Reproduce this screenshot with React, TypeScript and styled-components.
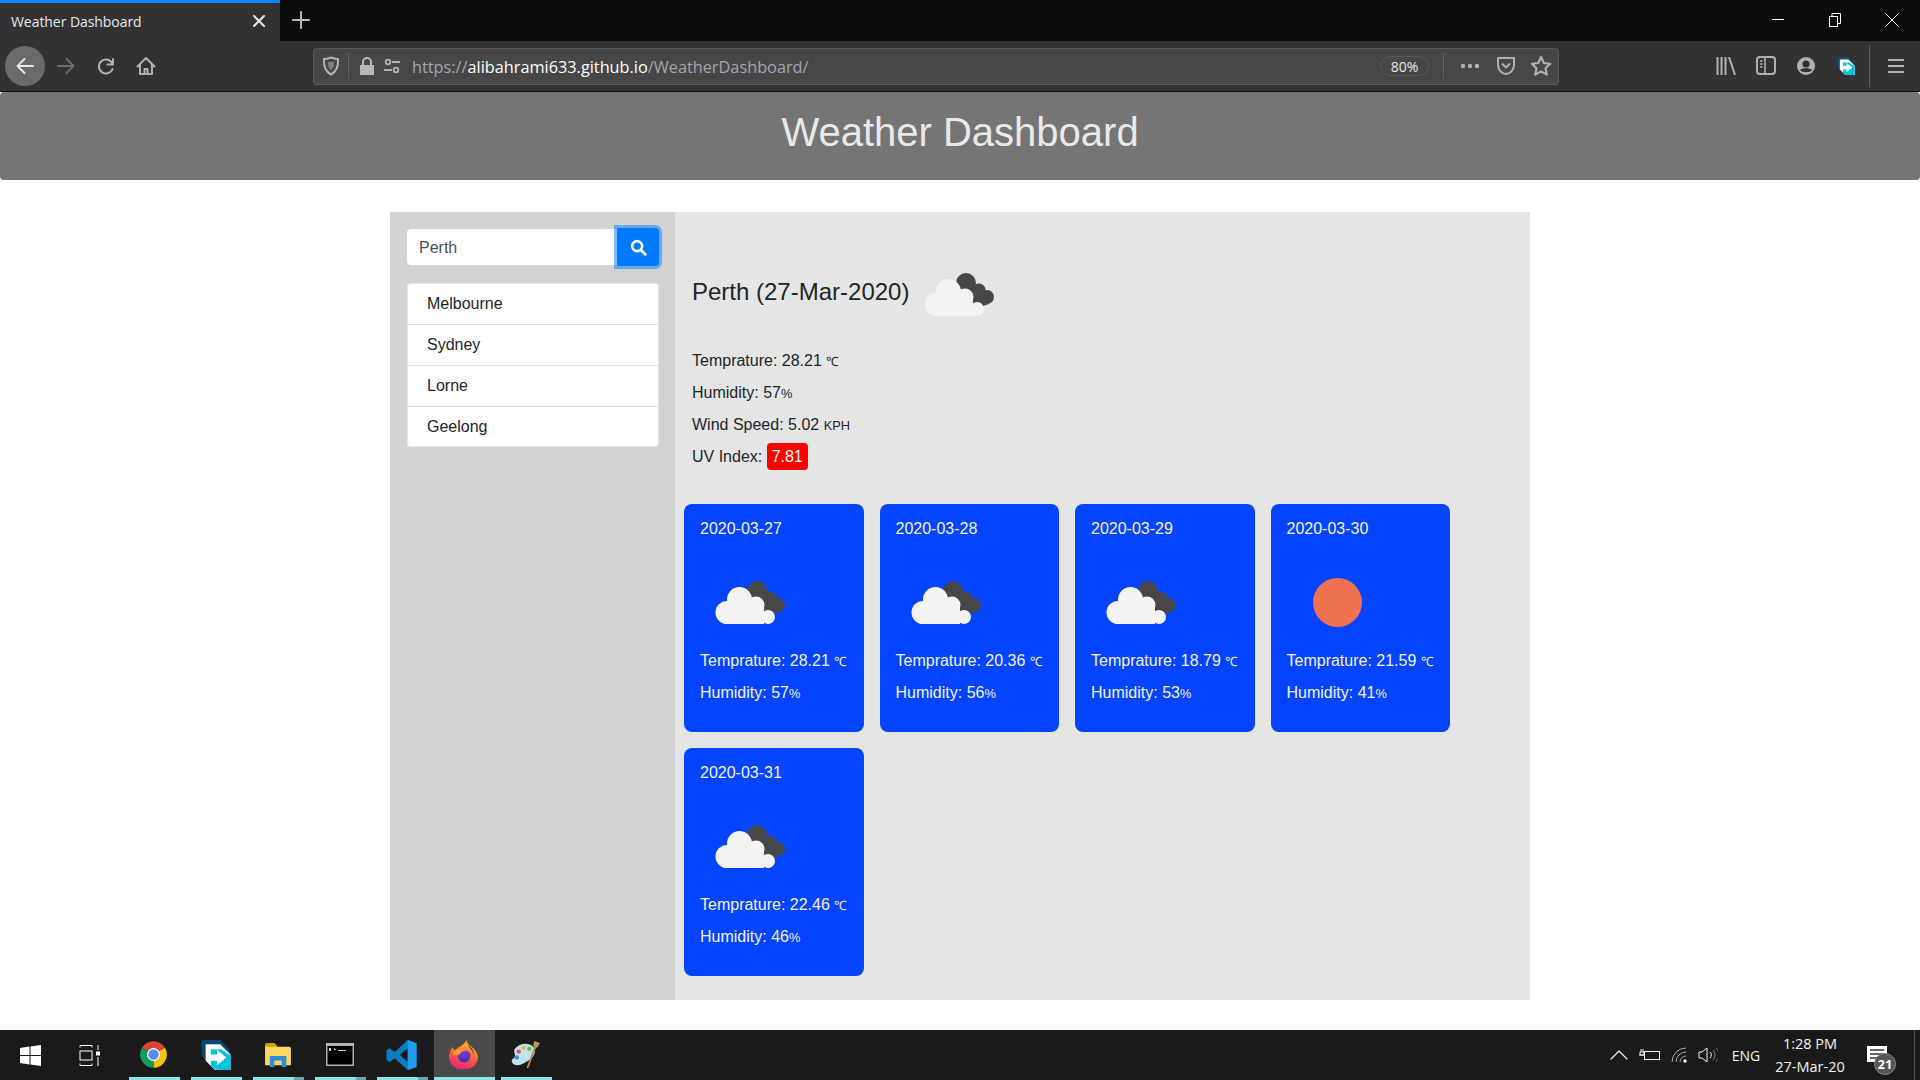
import React from "react";
import styled, { createGlobalStyle } from "styled-components";

const Global = createGlobalStyle`
  html, body { margin: 0; padding: 0; background: #fff; }
  * { box-sizing: border-box; }
`;

const Screen = styled.div`
  width: 1920px; height: 1080px; overflow: hidden; display: flex; flex-direction: column;
  font-family: "Liberation Sans", Arial, sans-serif; color: #212529; background: #fff;
`;

/* ---------- browser chrome ---------- */
const TabStrip = styled.div`
  height: 41px; background: #0c0c0c; display: flex; align-items: stretch; flex: none;
`;
const Tab = styled.div`
  width: 280px; background: #323234; border-top: 3px solid #0a84ff; display: flex; align-items: center;
  justify-content: space-between; padding: 0 14px 2px 11px; color: #e8e8e8;
  font: 14px "Open Sans", sans-serif; letter-spacing: -0.06px;
`;
const PlusSlot = styled.div`
  width: 42px; display: flex; align-items: center; justify-content: center; color: #b8b8b8; padding-bottom: 2px;
`;
const WindowControls = styled.div`
  margin-left: auto; display: flex; color: #fff;
`;
const WinBtn = styled.div`
  width: 57px; display: flex; align-items: center; justify-content: center; padding-bottom: 1px;
`;
const Toolbar = styled.div`
  height: 51px; flex: none; background: #323234; border-bottom: 1px solid #0c0c0c;
  display: flex; align-items: center; color: #b1b1b3;
`;
const NavGroup = styled.div`
  width: 313px; flex: none; display: flex; align-items: center; padding-left: 5px;
`;
const NavBtn = styled.div<{ $active?: boolean; $off?: boolean }>`
  width: 40px; height: 40px; display: flex; align-items: center; justify-content: center;
  border-radius: 50%; margin-right: ${(p) => (p.$active ? "1px" : "0")};
  background: ${(p) => (p.$active ? "#6a6a6c" : "transparent")};
  color: ${(p) => (p.$active ? "#e6e6e6" : p.$off ? "#6c6c6e" : "#b1b1b3")};
`;
const UrlBar = styled.div`
  width: 1246px; height: 37px; flex: none; background: #474749; border: 1px solid #59595b; border-radius: 3px;
  display: flex; align-items: center; font: 16.3px "Open Sans", sans-serif;
`;
const UrlSlot = styled.div<{ $w: number; $rule?: boolean }>`
  width: ${(p) => p.$w}px; height: 26px; flex: none; display: flex; align-items: center; justify-content: center;
  border-right: ${(p) => (p.$rule ? "1px solid #5f5f61" : "none")};
`;
const UrlText = styled.div`
  flex: 1; margin-left: 12px; color: #a5a5a7; white-space: nowrap; padding-top: 1px;
  b { font-weight: 400; color: #fff; }
`;
const ZoomPill = styled.div`
  width: 49px; height: 20px; border: 1px solid #5b5b5d; border-radius: 10px; color: #e8e8e8;
  font: 14px "Open Sans", sans-serif; display: flex; align-items: center; justify-content: center; margin-right: 14px;
`;
const RuleV = styled.div<{ $h: number }>`
  width: 1px; height: ${(p) => p.$h}px; background: #5f5f61; flex: none;
`;
const EndSlots = styled.div`
  display: flex; margin-left: 8px; padding-right: 0;
`;
const RightGroup = styled.div`
  flex: 1; display: flex; align-items: center; justify-content: flex-end; padding-right: 4px;
`;
const RightBtn = styled.div`
  width: 40px; height: 40px; display: flex; align-items: center; justify-content: center; padding-bottom: 1px;
`;
const RightRule = styled.div`
  width: 10px; height: 42px; flex: none; display: flex; justify-content: flex-start; padding-left: 3px;
`;

/* ---------- page ---------- */
const Page = styled.main`
  flex: 1; background: #fff; display: flex; flex-direction: column; align-items: center;
`;
const Banner = styled.header`
  width: 100%; height: 88px; background: #757575; border-radius: 4px; color: #e9e9e9;
  display: flex; justify-content: center; padding-top: 16px;
`;
const Title = styled.h1`
  margin: 0; font-size: 40px; font-weight: 400; line-height: 48px;
`;
const Shell = styled.div`
  width: 1140px; height: 788px; margin-top: 32px; display: flex;
`;
const Side = styled.aside`
  width: 285px; flex: none; background: #d3d3d3; padding: 16px 0 0 17px;
`;
const SearchForm = styled.div`
  width: 252px; height: 38px; display: flex; align-items: center; margin-bottom: 17px;
`;
const SearchInput = styled.div`
  flex: 1; height: 36px; background: #fff; border-radius: 4px 0 0 4px; color: #495057; font-size: 16px;
  display: flex; align-items: center; padding: 1px 0 0 12px;
`;
const SearchBtn = styled.div`
  width: 42px; height: 38px; background: #007bff; border-radius: 0 4px 4px 0; color: #fff;
  box-shadow: 0 0 0 3px rgba(0, 123, 255, 0.5); display: flex; align-items: center; justify-content: center;
  position: relative;
`;
const CityList = styled.ul`
  width: 252px; margin: 0; padding: 0; list-style: none; background: #fff; border-radius: 4px;
  box-shadow: inset 0 0 0 1px #e6e6e6;
`;
const City = styled.li`
  height: 41px; padding-left: 20px; display: flex; align-items: center; font-size: 16px; color: #212529;
  & + & { border-top: 1px solid #dfdfdf; }
`;
const Content = styled.section`
  flex: 1; background: #e5e5e5; padding-top: 32px;
`;
const HeadRow = styled.div`
  height: 100px; display: flex; padding-left: 17px;
`;
const CityTitle = styled.h2`
  margin: 30px 0 0; font-size: 24px; line-height: 36px; font-weight: 400; width: 217px; white-space: nowrap;
`;
const Stat = styled.p`
  margin: 0; padding-left: 17px; height: 32px; font-size: 16px; line-height: 34px; white-space: nowrap;
`;
const Unit = styled.small`
  font-size: 80%;
`;
const UvBadge = styled.span`
  display: inline-block; width: 41px; height: 27px; background: #f00; color: #fff; border-radius: 4px;
  text-align: center; line-height: 27px; vertical-align: 0;
`;
const Cards = styled.div`
  display: grid; grid-template-columns: repeat(4, 179.5px); gap: 16px; margin: 32px 0 0 9px;
`;
const Card = styled.article`
  height: 228px; background: #0544ff; color: #f2f2ff; border-radius: 8px; padding: 13px 0 0 16px; font-size: 16px;
`;
const CardLine = styled.div`
  height: 32px; line-height: 34px; white-space: nowrap;
`;
const CardDate = styled.div`
  height: 24px; line-height: 24px; margin-bottom: 11px;
`;
const IconBox = styled.div`
  height: 92px;
`;

/* ---------- taskbar ---------- */
const Taskbar = styled.footer`
  height: 50px; flex: none; background: #1a1a1a; display: flex; align-items: stretch; color: #f2f2f2;
  font: 14px "Open Sans", sans-serif;
`;
const StartBtn = styled.div<{ $w: number }>`
  width: ${(p) => p.$w}px; flex: none; display: flex; align-items: center; justify-content: center;
`;
const TaskApps = styled.div`
  display: flex; margin-left: 11px; gap: 11px;
`;
const TaskApp = styled.div<{ $active?: boolean; $stack?: boolean; $tight?: boolean }>`
  width: ${(p) => (p.$active ? "61px" : "51px")}; margin-left: ${(p) => (p.$tight ? "-5px" : "0")};
  display: flex; align-items: center; justify-content: center; padding: 0 2px 1px 0;
  background: ${(p) => (p.$active ? "#4a4a4a" : "transparent")}; position: relative;
  &::after {
    content: ""; position: absolute; left: 0; right: 0; bottom: 0; height: 3px;
    background: ${(p) =>
      p.$stack ? "linear-gradient(90deg, #8ae4ea 0 80%, #66a8ac 80% 100%)" : "#8ae4ea"};
  }
`;
const Tray = styled.div`
  margin-left: auto; display: flex; align-items: center; position: relative;
`;
const TraySlot = styled.div<{ $w: number }>`
  width: ${(p) => p.$w}px; flex: none; display: flex; align-items: center; justify-content: center;
`;
const Clock = styled.div`
  width: 78px; margin-right: 6px; flex: none; white-space: nowrap; display: flex; flex-direction: column; align-items: center;
  line-height: 23px; font-size: 14.5px;
`;
const Note = styled.div`
  width: 60px; height: 100%; flex: none; display: flex; align-items: center; justify-content: flex-start;
  padding-left: 12px; border-right: 1px solid #555; margin-right: 5px; position: relative;
`;
const NoteBadge = styled.div`
  position: absolute; left: 19px; top: 23px; width: 22px; height: 22px; border-radius: 50%;
  background: #555; border: 1px solid #888; color: #fff; font: 700 13px/20px "Open Sans", sans-serif; text-align: center;
`;

/* ---------- drawings ---------- */
const Cloud = () => (
  <svg width="100" height="92" viewBox="0 0 100 92">
    <g fill="#47474a">
      <circle cx="57" cy="39" r="10" />
      <circle cx="70" cy="46" r="6.5" />
      <circle cx="78" cy="53" r="7" />
      <path d="M48 34 L75 46 L80 60 L62 66 Z" />
    </g>
    <g fill="#f3f3f2">
      <circle cx="27" cy="60.5" r="11.5" />
      <circle cx="39.5" cy="47.5" r="12.5" />
      <circle cx="56" cy="53" r="8.5" />
      <circle cx="68" cy="65" r="7" />
      <path d="M27 50 H64 V72 H27 Z" />
    </g>
  </svg>
);
const Sun = () => (
  <svg width="100" height="92" viewBox="0 0 100 92">
    <circle cx="50.5" cy="50.5" r="24.5" fill="#ef7150" />
  </svg>
);
const Search = () => (
  <svg width="17" height="17" viewBox="0 0 16 16" fill="none" stroke="currentColor">
    <circle cx="6.7" cy="6.7" r="4.7" strokeWidth="2.4" />
    <path d="M10.3 10.3 L14.3 14.3" strokeWidth="2.8" strokeLinecap="round" />
  </svg>
);
const Line = ({ d, w = 20, h = 20, vb = "0 0 20 20", sw = 2 }: { d: string; w?: number; h?: number; vb?: string; sw?: number }) => (
  <svg width={w} height={h} viewBox={vb} fill="none" stroke="currentColor" strokeWidth={sw} strokeLinejoin="round" strokeLinecap="round">
    <path d={d} />
  </svg>
);
const Shield = () => (
  <svg width="18" height="20" viewBox="0 0 18 20" fill="none" stroke="#b1b1b3">
    <path d="M2 3 C6 3 7 2 9 1.5 C11 2 12 3 16 3 C16.5 11 14 16 9 18.5 C4 16 1.5 11 2 3 Z" strokeWidth="2" />
    <path d="M6 6 H12 C12 10 11 12.5 9 14 C7 12.5 6 10 6 6 Z" fill="#b1b1b3" stroke="none" opacity="0.55" />
  </svg>
);
const Lock = () => (
  <svg width="16" height="20" viewBox="0 0 16 20">
    <path d="M1 9 H15 V19 H1 Z" fill="#b8b8ba" />
    <path d="M4 9 V6 A4 4 0 0 1 12 6 V9" fill="none" stroke="#b8b8ba" strokeWidth="2" />
  </svg>
);
const Perm = () => (
  <svg width="18" height="18" viewBox="0 0 18 18" fill="none" stroke="#b1b1b3" strokeWidth="2">
    <circle cx="4.5" cy="4.5" r="2.6" />
    <path d="M9 4.5 H18 M0 13.5 H9" />
    <circle cx="13.5" cy="13.5" r="2.6" />
  </svg>
);
const Pocket = () => (
  <svg width="20" height="20" viewBox="0 0 20 20" fill="none" stroke="#b1b1b3" strokeWidth="2" strokeLinecap="round" strokeLinejoin="round">
    <path d="M2 2 H18 V9 C18 14 14 18 10 18 C6 18 2 14 2 9 Z" />
    <path d="M6.5 8 L10 11.5 L13.5 8" />
  </svg>
);
const Star = () => (
  <svg width="22" height="22" viewBox="0 0 22 22" fill="none" stroke="#b1b1b3" strokeWidth="2.2" strokeLinejoin="round">
    <path d="M11 2 L13.8 8 L20.2 8.8 L15.5 13.2 L16.8 19.6 L11 16.4 L5.2 19.6 L6.5 13.2 L1.8 8.8 L8.2 8 Z" />
  </svg>
);
const Dots = () => (
  <svg width="20" height="6" viewBox="0 0 20 6" fill="#b1b1b3">
    <circle cx="3" cy="3" r="2.2" /><circle cx="10" cy="3" r="2.2" /><circle cx="17" cy="3" r="2.2" />
  </svg>
);
const Library = () => (
  <svg width="20" height="18" viewBox="0 0 20 18" stroke="#b1b1b3" strokeWidth="2" fill="none">
    <path d="M1.5 0 V18 M5.5 0 V18 M9.5 0 V18 M13 0 L19 18" />
  </svg>
);
const SidebarIcon = () => (
  <svg width="20" height="19" viewBox="0 0 20 19" fill="none" stroke="#b1b1b3" strokeWidth="2">
    <rect x="1" y="1" width="18" height="17" rx="3" />
    <path d="M9 1 V18 M4 5 H6.5 M4 8 H6.5 M4 11 H6.5" strokeWidth="1.6" />
  </svg>
);
const Account = () => (
  <svg width="18" height="18" viewBox="0 0 18 18">
    <circle cx="9" cy="9" r="9" fill="#b1b1b3" />
    <circle cx="9" cy="7" r="3.6" fill="#323234" />
    <path d="M3 13 C5 10.5 13 10.5 15 13 C13 16 5 16 3 13 Z" fill="#323234" />
  </svg>
);
const Transfer = ({ s }: { s: number }) => (
  <svg width={s} height={s} viewBox="0 0 28 29">
    <path d="M0 0 H18 L27 9 V13 L18 4 H4 V19 L0 15 Z" fill="#0b4a6e" />
    <path d="M4 4 H18 L28 14 V29 H13 L4 20 Z" fill="#fff" />
    <path d="M9 9 H19 L28 15 V29 H14 L9 25 Z" fill="#00c4e0" />
    <path d="M7 14 H15 V9.5 L24 17 L15 24.5 V20 H7 Z" fill="#fff" />
  </svg>
);
const Hamburger = () => (
  <svg width="16" height="16" viewBox="0 0 16 16" stroke="#b1b1b3" strokeWidth="2.2">
    <path d="M0 2 H16 M0 8 H16 M0 14 H16" />
  </svg>
);
const WindowsLogo = () => (
  <svg width="21" height="21" viewBox="0 0 21 21" fill="#fff">
    <path d="M0 3 L9.5 1.6 V10 H0 Z M10.5 1.4 L21 0 V10 H10.5 Z M0 11 H9.5 V19.4 L0 18 Z M10.5 11 H21 V21 L10.5 19.6 Z" />
  </svg>
);
const TaskView = () => (
  <svg width="21" height="21" viewBox="0 0 21 21" fill="none" stroke="#fff" strokeWidth="1">
    <path d="M1 2.5 V0.5 H13 V2.5 M1 18.5 V20.5 H13 V18.5" />
    <rect x="1" y="6" width="12" height="9" />
    <path d="M19 0 V5 M19 12 V21" />
    <rect x="17.5" y="7" width="3" height="3" fill="#fff" />
  </svg>
);
const Chrome = () => (
  <svg width="29" height="29" viewBox="0 0 24 24">
    <path d="M12 12 L2.47 6.5 A11 11 0 0 1 21.53 6.5 Z" fill="#db4437" />
    <path d="M12 12 L21.53 6.5 A11 11 0 0 1 12 23 Z" fill="#f4c20d" />
    <path d="M12 12 L12 23 A11 11 0 0 1 2.47 6.5 Z" fill="#0f9d58" />
    <circle cx="12" cy="12" r="5.4" fill="#fff" />
    <circle cx="12" cy="12" r="4.3" fill="#5a8cf0" />
  </svg>
);
const Explorer = () => (
  <svg width="28" height="24" viewBox="0 0 28 26">
    <path d="M0 2 A2 2 0 0 1 2 0 H10 L13 3 V6 H0 Z" fill="#d99a0d" />
    <path d="M0 4 H26 A2 2 0 0 1 28 6 V24 H0 Z" fill="#fdd661" />
    <path d="M5 14 H23 V26 H18 V19 H10 V26 H5 Z" fill="#2d8fdc" />
  </svg>
);
const Terminal = () => (
  <svg width="28" height="23" viewBox="0 0 28 23">
    <rect width="28" height="23" fill="#b0b0b0" />
    <rect x="1.5" y="3" width="25" height="18.5" fill="#000" />
    <path d="M3 5 H5 V8 H3 Z M8 5 L11 7 L8 7 Z M12 7 H20 V8 H12 Z" fill="#ccc" />
  </svg>
);
const VsCode = () => (
  <svg width="31" height="30" viewBox="0 0 24 24">
    <path d="M17 0 L24 2.5 V21.5 L17 24 L6.5 14.5 L2.5 17.5 L0 16 V8 L2.5 6.5 L6.5 9.5 Z M17 6.5 L10.5 12 L17 17.5 Z" fill="#0a7cc4" fillRule="evenodd" />
    <path d="M17 0 L24 2.5 V21.5 L17 24 Z" fill="#1f9cf0" />
  </svg>
);
const Firefox = () => (
  <svg width="29" height="29" viewBox="0 0 29 29">
    <defs>
      <linearGradient id="fx" x1="0.7" y1="0" x2="0.4" y2="1">
        <stop offset="0" stopColor="#ffc02e" />
        <stop offset="0.5" stopColor="#ff6a30" />
        <stop offset="1" stopColor="#e81f80" />
      </linearGradient>
      <linearGradient id="fy" x1="0.5" y1="0" x2="0.5" y2="1">
        <stop offset="0" stopColor="#8a3fd0" />
        <stop offset="1" stopColor="#4b2bb0" />
      </linearGradient>
    </defs>
    <path d="M18 0 C17 4 21 5 24 8 C27 11 29 14 29 17 A14.5 12.5 0 1 1 0.5 14 C1 11 2 9 4 7 C4 9 5 10 6 10 C9 7 14 6 18 0 Z" fill="url(#fx)" />
    <circle cx="15" cy="16" r="6.5" fill="url(#fy)" />
    <path d="M3 13 C7 8 15 8 19 11 C14 10 12 12 11 14 C9 16 6 15 3 13 Z" fill="#ff9a2e" />
    <path d="M19 5 C22 7 25 10 25 15 C24 11 21 9 19 5 Z" fill="#4a4a4a" />
  </svg>
);
const Palette = () => (
  <svg width="29" height="29" viewBox="0 0 30 30">
    <path d="M4 9 C10 2 20 3 24 8 C27 13 22 20 15 23 C9 27 3 27 1 23 C0 19 3 20 4 17 C5 14 2 13 4 9 Z" fill="#bfe3f2" />
    <circle cx="8" cy="12" r="2.3" fill="#e0584f" />
    <circle cx="13" cy="8" r="2.3" fill="#f0b84a" />
    <circle cx="19" cy="9" r="2.3" fill="#76b84e" />
    <circle cx="6" cy="18" r="2.3" fill="#3d8fd0" />
    <path d="M26 5 L17 29" stroke="#b98a45" strokeWidth="2" />
    <path d="M24 1 L30 3 L27 8 L23 6 Z" fill="#c09a5a" />
  </svg>
);

const days = [
  { date: "2020-03-27", t: "28.21", h: "57", sun: false },
  { date: "2020-03-28", t: "20.36", h: "56", sun: false },
  { date: "2020-03-29", t: "18.79", h: "53", sun: false },
  { date: "2020-03-30", t: "21.59", h: "41", sun: true },
  { date: "2020-03-31", t: "22.46", h: "46", sun: false },
];

export default function App() {
  return (
    <Screen>
      <Global />
      <TabStrip>
        <Tab>
          Weather Dashboard
          <Line w={14} h={14} vb="0 0 14 14" d="M2 2 L12 12 M12 2 L2 12" sw={2} />
        </Tab>
        <PlusSlot><Line w={18} h={18} vb="0 0 18 18" d="M9 1 V17 M1 9 H17" sw={2} /></PlusSlot>
        <WindowControls>
          <WinBtn><Line w={12} h={12} vb="0 0 12 12" d="M0 5.5 H12" sw={1} /></WinBtn>
          <WinBtn>
            <svg width="12" height="14" viewBox="0 0 12 14" fill="none" stroke="#fff"><rect x="0.5" y="3.5" width="8" height="10" /><path d="M3 3 V0.5 H11.5 V10.5 H9" /></svg>
          </WinBtn>
          <WinBtn><Line w={14} h={14} vb="0 0 14 14" d="M0.5 0.5 L13.5 13.5 M13.5 0.5 L0.5 13.5" sw={1} /></WinBtn>
        </WindowControls>
      </TabStrip>

      <Toolbar>
        <NavGroup>
          <NavBtn $active><Line d="M18 10 H3 M9.5 3 L2.5 10 L9.5 17" /></NavBtn>
          <NavBtn $off><Line d="M2 10 H17 M10.5 3 L17.5 10 L10.5 17" /></NavBtn>
          <NavBtn><Line d="M17 3 V8.5 H11.5 M16.5 8 A7 7 0 1 0 16.5 13" /></NavBtn>
          <NavBtn><Line d="M1.5 10.5 L10 2 L18.5 10.5 M4 8.5 V18 H16 V8.5 M8.5 18 V13 H11.5 V18" /></NavBtn>
        </NavGroup>
        <UrlBar>
          <UrlSlot $w={35} $rule><Shield /></UrlSlot>
          <UrlSlot $w={35}><Lock /></UrlSlot>
          <UrlSlot $w={16}><Perm /></UrlSlot>
          <UrlText>https://<b>alibahrami633.github.io</b>/WeatherDashboard/</UrlText>
          <ZoomPill>80%</ZoomPill>
          <RuleV $h={26} />
          <EndSlots>
            <UrlSlot $w={36}><Dots /></UrlSlot>
            <UrlSlot $w={35}><Pocket /></UrlSlot>
            <UrlSlot $w={35}><Star /></UrlSlot>
          </EndSlots>
        </UrlBar>
        <RightGroup>
          <RightBtn><Library /></RightBtn>
          <RightBtn><SidebarIcon /></RightBtn>
          <RightBtn><Account /></RightBtn>
          <RightBtn><Transfer s={18} /></RightBtn>
          <RightRule><RuleV $h={42} /></RightRule>
          <RightBtn><Hamburger /></RightBtn>
        </RightGroup>
      </Toolbar>

      <Page>
        <Banner><Title>Weather Dashboard</Title></Banner>
        <Shell>
          <Side>
            <SearchForm>
              <SearchInput>Perth</SearchInput>
              <SearchBtn><Search /></SearchBtn>
            </SearchForm>
            <CityList>
              {["Melbourne", "Sydney", "Lorne", "Geelong"].map((c) => <City key={c}>{c}</City>)}
            </CityList>
          </Side>
          <Content>
            <HeadRow>
              <CityTitle>Perth (27-Mar-2020)</CityTitle>
              <Cloud />
            </HeadRow>
            <Stat>Temprature: 28.21 <Unit>℃</Unit></Stat>
            <Stat>Humidity: 57<Unit>%</Unit></Stat>
            <Stat>Wind Speed: 5.02 <Unit>KPH</Unit></Stat>
            <Stat>UV Index: <UvBadge>7.81</UvBadge></Stat>
            <Cards>
              {days.map((d) => (
                <Card key={d.date}>
                  <CardDate>{d.date}</CardDate>
                  <IconBox>{d.sun ? <Sun /> : <Cloud />}</IconBox>
                  <CardLine>Temprature: {d.t} <Unit>℃</Unit></CardLine>
                  <CardLine>Humidity: {d.h}<Unit>%</Unit></CardLine>
                </Card>
              ))}
            </Cards>
          </Content>
        </Shell>
      </Page>

      <Taskbar>
        <StartBtn $w={60}><WindowsLogo /></StartBtn>
        <StartBtn $w={58}><TaskView /></StartBtn>
        <TaskApps>
          <TaskApp><Chrome /></TaskApp>
          <TaskApp><Transfer s={30} /></TaskApp>
          <TaskApp $stack><Explorer /></TaskApp>
          <TaskApp $stack><Terminal /></TaskApp>
          <TaskApp $stack><VsCode /></TaskApp>
          <TaskApp $active $tight><Firefox /></TaskApp>
          <TaskApp $tight><Palette /></TaskApp>
        </TaskApps>
        <Tray>
          <TraySlot $w={30}><Line w={18} h={10} vb="0 0 18 10" d="M1 9 L9 1 L17 9" sw={1.2} /></TraySlot>
          <TraySlot $w={30}>
            <svg width="21" height="14" viewBox="0 0 21 14" fill="none" stroke="#f2f2f2"><rect x="5.5" y="3.5" width="15" height="8" /><path d="M0 7 H5 M2 1 V4 M4 1 V4 M1 4 H5 V7 H1 Z" /></svg>
          </TraySlot>
          <TraySlot $w={31}>
            <svg width="18" height="16" viewBox="0 0 18 16" fill="none" stroke="#aaa"><path d="M1 15 A14 14 0 0 1 15 1 M5 15 A10 10 0 0 1 15 5 M9 15 A6 6 0 0 1 15 9" /><circle cx="14" cy="14" r="1.7" fill="#fff" stroke="none" /></svg>
          </TraySlot>
          <TraySlot $w={26}>
            <svg width="20" height="16" viewBox="0 0 20 16" fill="none" stroke="#eee"><path d="M1 5 H4 L9 1 V15 L4 11 H1 Z" /><path d="M12 5 A4 4 0 0 1 12 11" /><path d="M15 3 A7 7 0 0 1 15 13" stroke="#888" /><path d="M18 1 A10 10 0 0 1 18 15" stroke="#666" /></svg>
          </TraySlot>
          <TraySlot $w={50}>ENG</TraySlot>
          <Clock><span>1:28 PM</span><span>27-Mar-20</span></Clock>
          <Note>
            <svg width="20" height="18" viewBox="0 0 20 18"><path d="M0 0 H20 V16 H0 Z" fill="#fff" /><path d="M3 4 H17 M3 8 H17 M3 12 H12" stroke="#333" strokeWidth="1.4" /></svg>
            <NoteBadge>21</NoteBadge>
          </Note>
        </Tray>
      </Taskbar>
    </Screen>
  );
}
